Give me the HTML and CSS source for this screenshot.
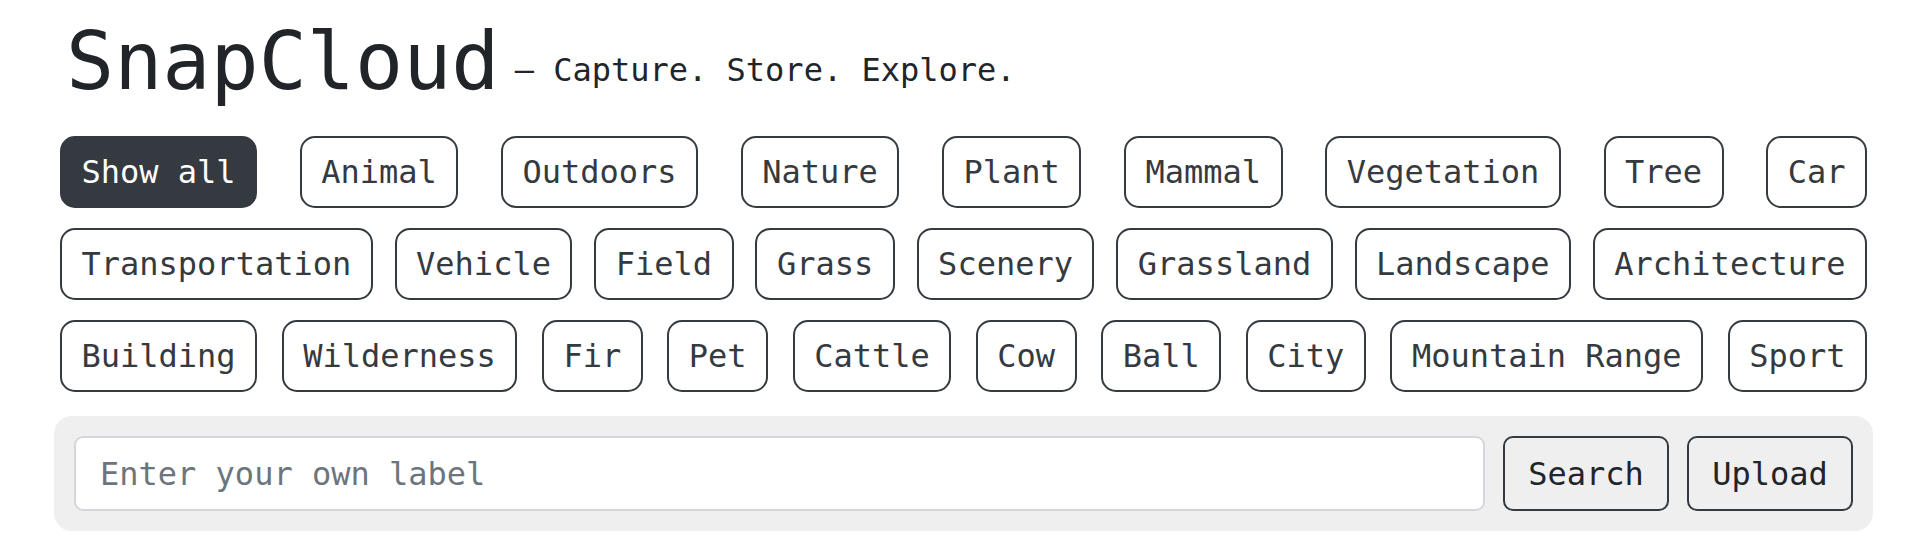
FILE: index.html
```html
<!DOCTYPE html>
<html lang="en">
<head>
<meta charset="utf-8">
<title>SnapCloud</title>
<link rel="stylesheet" href="styles.css">
</head>
<body>
<div class="page">
  <h1 class="title">SnapCloud <small class="tagline">– Capture. Store. Explore.</small></h1>
  <div class="tags">
    <button class="tag active">Show all</button>
    <button class="tag">Animal</button>
    <button class="tag">Outdoors</button>
    <button class="tag">Nature</button>
    <button class="tag">Plant</button>
    <button class="tag">Mammal</button>
    <button class="tag">Vegetation</button>
    <button class="tag">Tree</button>
    <button class="tag">Car</button>
    <button class="tag">Transportation</button>
    <button class="tag">Vehicle</button>
    <button class="tag">Field</button>
    <button class="tag">Grass</button>
    <button class="tag">Scenery</button>
    <button class="tag">Grassland</button>
    <button class="tag">Landscape</button>
    <button class="tag">Architecture</button>
    <button class="tag">Building</button>
    <button class="tag">Wilderness</button>
    <button class="tag">Fir</button>
    <button class="tag">Pet</button>
    <button class="tag">Cattle</button>
    <button class="tag">Cow</button>
    <button class="tag">Ball</button>
    <button class="tag">City</button>
    <button class="tag">Mountain Range</button>
    <button class="tag">Sport</button>
  </div>
  <div class="search">
    <input class="search-input" type="text" placeholder="Enter your own label">
    <button class="action">Search</button>
    <button class="action">Upload</button>
  </div>
</div>
</body>
</html>
```

FILE: styles.css
```css
* { box-sizing: border-box; }

body {
  margin: 0;
  background: #ffffff;
  color: #212529;
  font-family: "DejaVu Sans Mono", "Liberation Mono", monospace;
}

.page {
  padding: 14px 59px 0 54px;
}

.title {
  margin: 0 0 0 12px;
  font-size: 80px;
  font-weight: 400;
  line-height: 96px;
  color: #212529;
  white-space: nowrap;
}

.tagline {
  display: inline-block;
  font-size: 32px;
  line-height: 1;
  vertical-align: 8px;
  margin-left: -33px;
  color: #212529;
}

.tags {
  display: flex;
  flex-wrap: wrap;
  justify-content: space-between;
  column-gap: 20px;
  row-gap: 20px;
  padding: 0 6px;
  margin-top: 26px;
}

.tag {
  height: 72px;
  padding: 0 19.5px;
  border: 2px solid #343a40;
  border-radius: 15px;
  background: #ffffff;
  color: #343a40;
  font-family: "DejaVu Sans Mono", "Liberation Mono", monospace;
  font-size: 32px;
  line-height: 1;
  white-space: nowrap;
}

.tag.active {
  background: #343a40;
  color: #ffffff;
}

.search {
  display: flex;
  gap: 18px;
  margin-top: 24px;
  padding: 20px;
  background: #efefef;
  border-radius: 18px;
}

.search-input {
  flex: 1;
  height: 75px;
  padding: 0 24px;
  border: 2px solid #d3d7dd;
  border-radius: 9px;
  background: #ffffff;
  color: #212529;
  font-family: "DejaVu Sans Mono", "Liberation Mono", monospace;
  font-size: 32px;
  outline: none;
}

.search-input::placeholder {
  color: #6c757d;
}

.action {
  width: 166px;
  height: 75px;
  padding: 0;
  border: 2px solid #343a40;
  border-radius: 10px;
  background: transparent;
  color: #212529;
  font-family: "DejaVu Sans Mono", "Liberation Mono", monospace;
  font-size: 32px;
  line-height: 1;
}
```
